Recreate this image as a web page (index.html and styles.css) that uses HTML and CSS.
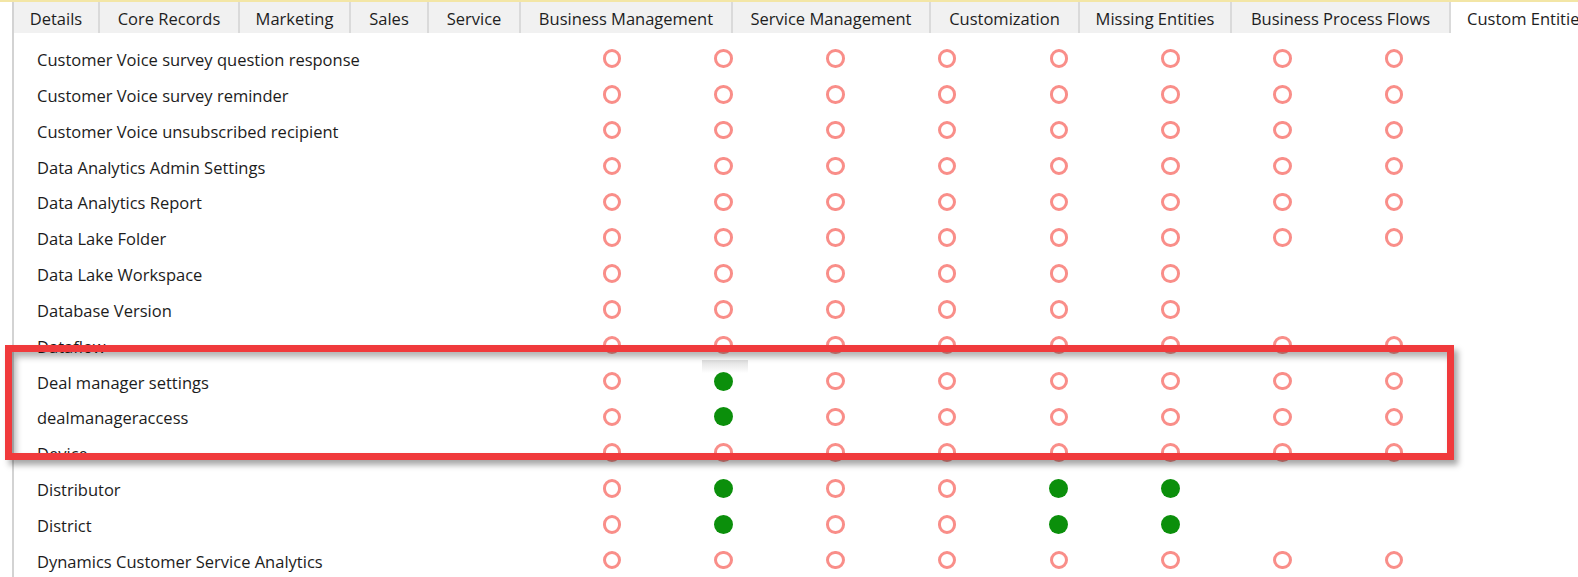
FILE: index.html
```html
<!DOCTYPE html>
<html>
<head>
<meta charset="utf-8">
<link rel="stylesheet" href="styles.css">
</head>
<body>
<div class="topline"></div>
<div class="panel">
  <div class="tabs">
    <div class="tab">Details</div>
    <div class="tab">Core Records</div>
    <div class="tab">Marketing</div>
    <div class="tab">Sales</div>
    <div class="tab">Service</div>
    <div class="tab">Business Management</div>
    <div class="tab">Service Management</div>
    <div class="tab">Customization</div>
    <div class="tab">Missing Entities</div>
    <div class="tab">Business Process Flows</div>
    <div class="tab active">Custom Entities</div>
  </div>
  <div class="rows">
    <div class="row"><div class="name">Customer Voice survey question response</div><div class="cell"><i class="dot"></i></div><div class="cell"><i class="dot"></i></div><div class="cell"><i class="dot"></i></div><div class="cell"><i class="dot"></i></div><div class="cell"><i class="dot"></i></div><div class="cell"><i class="dot"></i></div><div class="cell"><i class="dot"></i></div><div class="cell"><i class="dot"></i></div></div>
    <div class="row"><div class="name">Customer Voice survey reminder</div><div class="cell"><i class="dot"></i></div><div class="cell"><i class="dot"></i></div><div class="cell"><i class="dot"></i></div><div class="cell"><i class="dot"></i></div><div class="cell"><i class="dot"></i></div><div class="cell"><i class="dot"></i></div><div class="cell"><i class="dot"></i></div><div class="cell"><i class="dot"></i></div></div>
    <div class="row"><div class="name">Customer Voice unsubscribed recipient</div><div class="cell"><i class="dot"></i></div><div class="cell"><i class="dot"></i></div><div class="cell"><i class="dot"></i></div><div class="cell"><i class="dot"></i></div><div class="cell"><i class="dot"></i></div><div class="cell"><i class="dot"></i></div><div class="cell"><i class="dot"></i></div><div class="cell"><i class="dot"></i></div></div>
    <div class="row"><div class="name">Data Analytics Admin Settings</div><div class="cell"><i class="dot"></i></div><div class="cell"><i class="dot"></i></div><div class="cell"><i class="dot"></i></div><div class="cell"><i class="dot"></i></div><div class="cell"><i class="dot"></i></div><div class="cell"><i class="dot"></i></div><div class="cell"><i class="dot"></i></div><div class="cell"><i class="dot"></i></div></div>
    <div class="row"><div class="name">Data Analytics Report</div><div class="cell"><i class="dot"></i></div><div class="cell"><i class="dot"></i></div><div class="cell"><i class="dot"></i></div><div class="cell"><i class="dot"></i></div><div class="cell"><i class="dot"></i></div><div class="cell"><i class="dot"></i></div><div class="cell"><i class="dot"></i></div><div class="cell"><i class="dot"></i></div></div>
    <div class="row"><div class="name">Data Lake Folder</div><div class="cell"><i class="dot"></i></div><div class="cell"><i class="dot"></i></div><div class="cell"><i class="dot"></i></div><div class="cell"><i class="dot"></i></div><div class="cell"><i class="dot"></i></div><div class="cell"><i class="dot"></i></div><div class="cell"><i class="dot"></i></div><div class="cell"><i class="dot"></i></div></div>
    <div class="row"><div class="name">Data Lake Workspace</div><div class="cell"><i class="dot"></i></div><div class="cell"><i class="dot"></i></div><div class="cell"><i class="dot"></i></div><div class="cell"><i class="dot"></i></div><div class="cell"><i class="dot"></i></div><div class="cell"><i class="dot"></i></div><div class="cell"></div><div class="cell"></div></div>
    <div class="row"><div class="name">Database Version</div><div class="cell"><i class="dot"></i></div><div class="cell"><i class="dot"></i></div><div class="cell"><i class="dot"></i></div><div class="cell"><i class="dot"></i></div><div class="cell"><i class="dot"></i></div><div class="cell"><i class="dot"></i></div><div class="cell"></div><div class="cell"></div></div>
    <div class="row"><div class="name">Dataflow</div><div class="cell"><i class="dot"></i></div><div class="cell"><i class="dot"></i></div><div class="cell"><i class="dot"></i></div><div class="cell"><i class="dot"></i></div><div class="cell"><i class="dot"></i></div><div class="cell"><i class="dot"></i></div><div class="cell"><i class="dot"></i></div><div class="cell"><i class="dot"></i></div></div>
    <div class="row"><div class="name">Deal manager settings</div><div class="cell"><i class="dot"></i></div><div class="cell"><i class="dot on"></i></div><div class="cell"><i class="dot"></i></div><div class="cell"><i class="dot"></i></div><div class="cell"><i class="dot"></i></div><div class="cell"><i class="dot"></i></div><div class="cell"><i class="dot"></i></div><div class="cell"><i class="dot"></i></div></div>
    <div class="row"><div class="name">dealmanageraccess</div><div class="cell"><i class="dot"></i></div><div class="cell"><i class="dot on"></i></div><div class="cell"><i class="dot"></i></div><div class="cell"><i class="dot"></i></div><div class="cell"><i class="dot"></i></div><div class="cell"><i class="dot"></i></div><div class="cell"><i class="dot"></i></div><div class="cell"><i class="dot"></i></div></div>
    <div class="row"><div class="name">Device</div><div class="cell"><i class="dot"></i></div><div class="cell"><i class="dot"></i></div><div class="cell"><i class="dot"></i></div><div class="cell"><i class="dot"></i></div><div class="cell"><i class="dot"></i></div><div class="cell"><i class="dot"></i></div><div class="cell"><i class="dot"></i></div><div class="cell"><i class="dot"></i></div></div>
    <div class="row"><div class="name">Distributor</div><div class="cell"><i class="dot"></i></div><div class="cell"><i class="dot on"></i></div><div class="cell"><i class="dot"></i></div><div class="cell"><i class="dot"></i></div><div class="cell"><i class="dot on"></i></div><div class="cell"><i class="dot on"></i></div><div class="cell"></div><div class="cell"></div></div>
    <div class="row"><div class="name">District</div><div class="cell"><i class="dot"></i></div><div class="cell"><i class="dot on"></i></div><div class="cell"><i class="dot"></i></div><div class="cell"><i class="dot"></i></div><div class="cell"><i class="dot on"></i></div><div class="cell"><i class="dot on"></i></div><div class="cell"></div><div class="cell"></div></div>
    <div class="row"><div class="name">Dynamics Customer Service Analytics</div><div class="cell"><i class="dot"></i></div><div class="cell"><i class="dot"></i></div><div class="cell"><i class="dot"></i></div><div class="cell"><i class="dot"></i></div><div class="cell"><i class="dot"></i></div><div class="cell"><i class="dot"></i></div><div class="cell"><i class="dot"></i></div><div class="cell"><i class="dot"></i></div></div>
  </div>
</div>
<div class="smudge"></div>
<div class="highlight"></div>
</body>
</html>
```

FILE: styles.css
```css
* { box-sizing: border-box; }
html, body {
  margin: 0;
  padding: 0;
  background: #ffffff;
  overflow: hidden;
  height: 577px;
}
body {
  font-family: "Open Sans", "Noto Sans", sans-serif;
  font-size: 16.5px;
  color: #1c1c1c;
  position: relative;
}
.topline {
  height: 2px;
  background: #f3e6a6;
}
.panel {
  margin-left: 12px;
  border-left: 2px solid #d3d3d3;
  height: 575px;
}
.tabs {
  display: flex;
  height: 31px;
  background: #f1f1f1;
  white-space: nowrap;
  overflow: hidden;
}
.tab {
  flex: none;
  height: 31px;
  line-height: 29px;
  padding-top: 2px;
  text-align: center;
  border-right: 2px solid #dadada;
  color: #1e1e1e;
}
.tab:nth-child(1) { width: 86px; }
.tab:nth-child(2) { width: 140px; }
.tab:nth-child(3) { width: 111px; }
.tab:nth-child(4) { width: 78px; }
.tab:nth-child(5) { width: 92px; }
.tab:nth-child(6) { width: 212px; }
.tab:nth-child(7) { width: 198px; }
.tab:nth-child(8) { width: 149px; }
.tab:nth-child(9) { width: 152px; }
.tab:nth-child(10) { width: 219px; }
.tab.active {
  width: 160px;
  background: #ffffff;
  border-right: none;
  text-align: left;
  padding-left: 16px;
}
.rows {
  padding-top: 9px;
}
.row {
  display: flex;
  height: 35.85px;
  align-items: center;
}
.name {
  flex: none;
  width: 542px;
  padding-left: 23px;
  line-height: 35.85px;
  white-space: nowrap;
}
.cell {
  flex: none;
  width: 111.75px;
  display: flex;
  justify-content: center;
  align-items: center;
  height: 100%;
}
.dot {
  display: block;
  width: 18.5px;
  height: 18.5px;
  border-radius: 50%;
  border: 3px solid #f98e89;
  margin-bottom: 3px;
}
.dot.on {
  border: none;
  width: 19px;
  height: 19px;
  background: #0b8f0b;
}
.smudge {
  position: absolute;
  left: 702px;
  top: 360px;
  width: 46px;
  height: 13px;
  background: linear-gradient(#dedede, rgba(255,255,255,0));
}
.highlight {
  position: absolute;
  left: 5px;
  top: 345px;
  width: 1449px;
  height: 115px;
  border: 7px solid #f03a3c;
  box-shadow: 4px 5px 6px rgba(0,0,0,0.35), inset 4px 5px 6px rgba(0,0,0,0.3);
}
```
